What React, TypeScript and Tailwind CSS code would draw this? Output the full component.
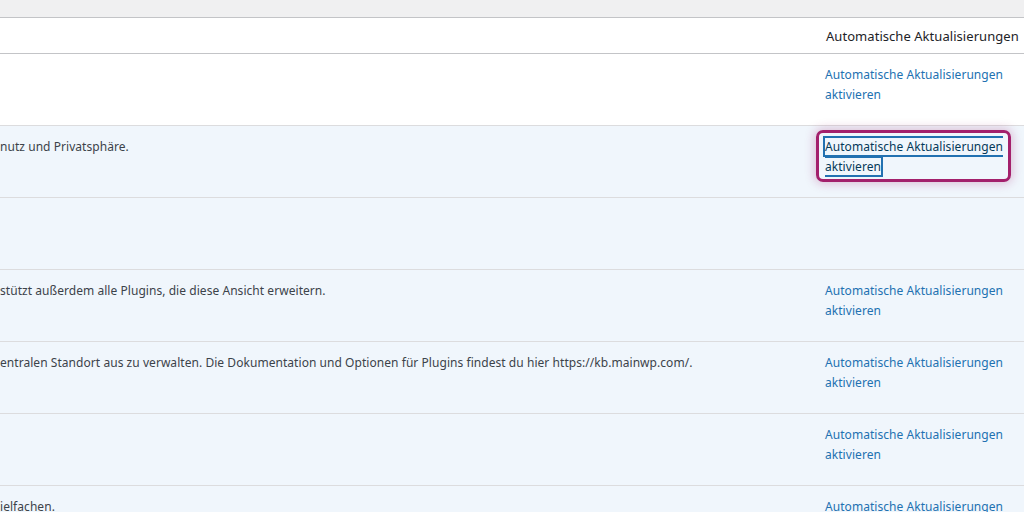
import React from "react";

type Row = {
  text: string;
  link: boolean;
  active: boolean;
  focused?: boolean;
};

const rows: Row[] = [
  { text: "", link: true, active: false },
  { text: "nutz und Privatsphäre.", link: true, active: true, focused: true },
  { text: "", link: false, active: true },
  { text: "stützt außerdem alle Plugins, die diese Ansicht erweitern.", link: true, active: true },
  {
    text: "entralen Standort aus zu verwalten. Die Dokumentation und Optionen für Plugins findest du hier https://kb.mainwp.com/.",
    link: true,
    active: true,
  },
  { text: "", link: true, active: true },
  { text: "ielfachen.", link: true, active: true },
];

function UpdateLink({ focused }: { focused?: boolean }) {
  if (focused) {
    return (
      <a href="#" className="text-[#043959] shadow-[0_0_0_2px_#2271b1]">
        Automatische Aktualisierungen aktivieren
      </a>
    );
  }
  return (
    <a href="#" className="text-[#2271b1]">
      Automatische Aktualisierungen aktivieren
    </a>
  );
}

export default function App() {
  return (
    <div
      className="w-[1024px] h-[512px] overflow-hidden bg-white text-[12px] tracking-[0.05px] leading-5 text-[#3c434a]"
      style={{ fontFamily: '"Noto Sans", Arial, sans-serif' }}
    >
      <div className="h-[18px] bg-[#f0f0f1] border-b border-[#c3c4c7]" />

      <div className="flex h-[36px] border-b border-[#c3c4c7] bg-white">
        <div className="flex-1" />
        <div className="w-[209px] pl-[11px] flex items-center whitespace-nowrap text-[13px] text-[#1d2327]">
          Automatische Aktualisierungen
        </div>
      </div>

      {rows.map((row, i) => (
        <div
          key={i}
          className={`flex h-[72px] border-b border-[#dcdcde] ${
            row.active ? "bg-[#f0f6fc]" : "bg-white"
          }`}
        >
          <div className="flex-1 min-w-0 overflow-hidden whitespace-nowrap pt-[11px]">
            {row.text}
          </div>
          <div className="relative w-[209px] pt-[11px] pl-[10px] pr-[6px]">
            {row.focused && (
              <div className="absolute left-[1px] top-[4px] w-[195px] h-[52px] rounded-[7px] border-[3px] border-[#a3206c] shadow-[0_0_10px_2px_rgba(163,32,108,0.25)]" />
            )}
            {row.link && <UpdateLink focused={row.focused} />}
          </div>
        </div>
      ))}
    </div>
  );
}
